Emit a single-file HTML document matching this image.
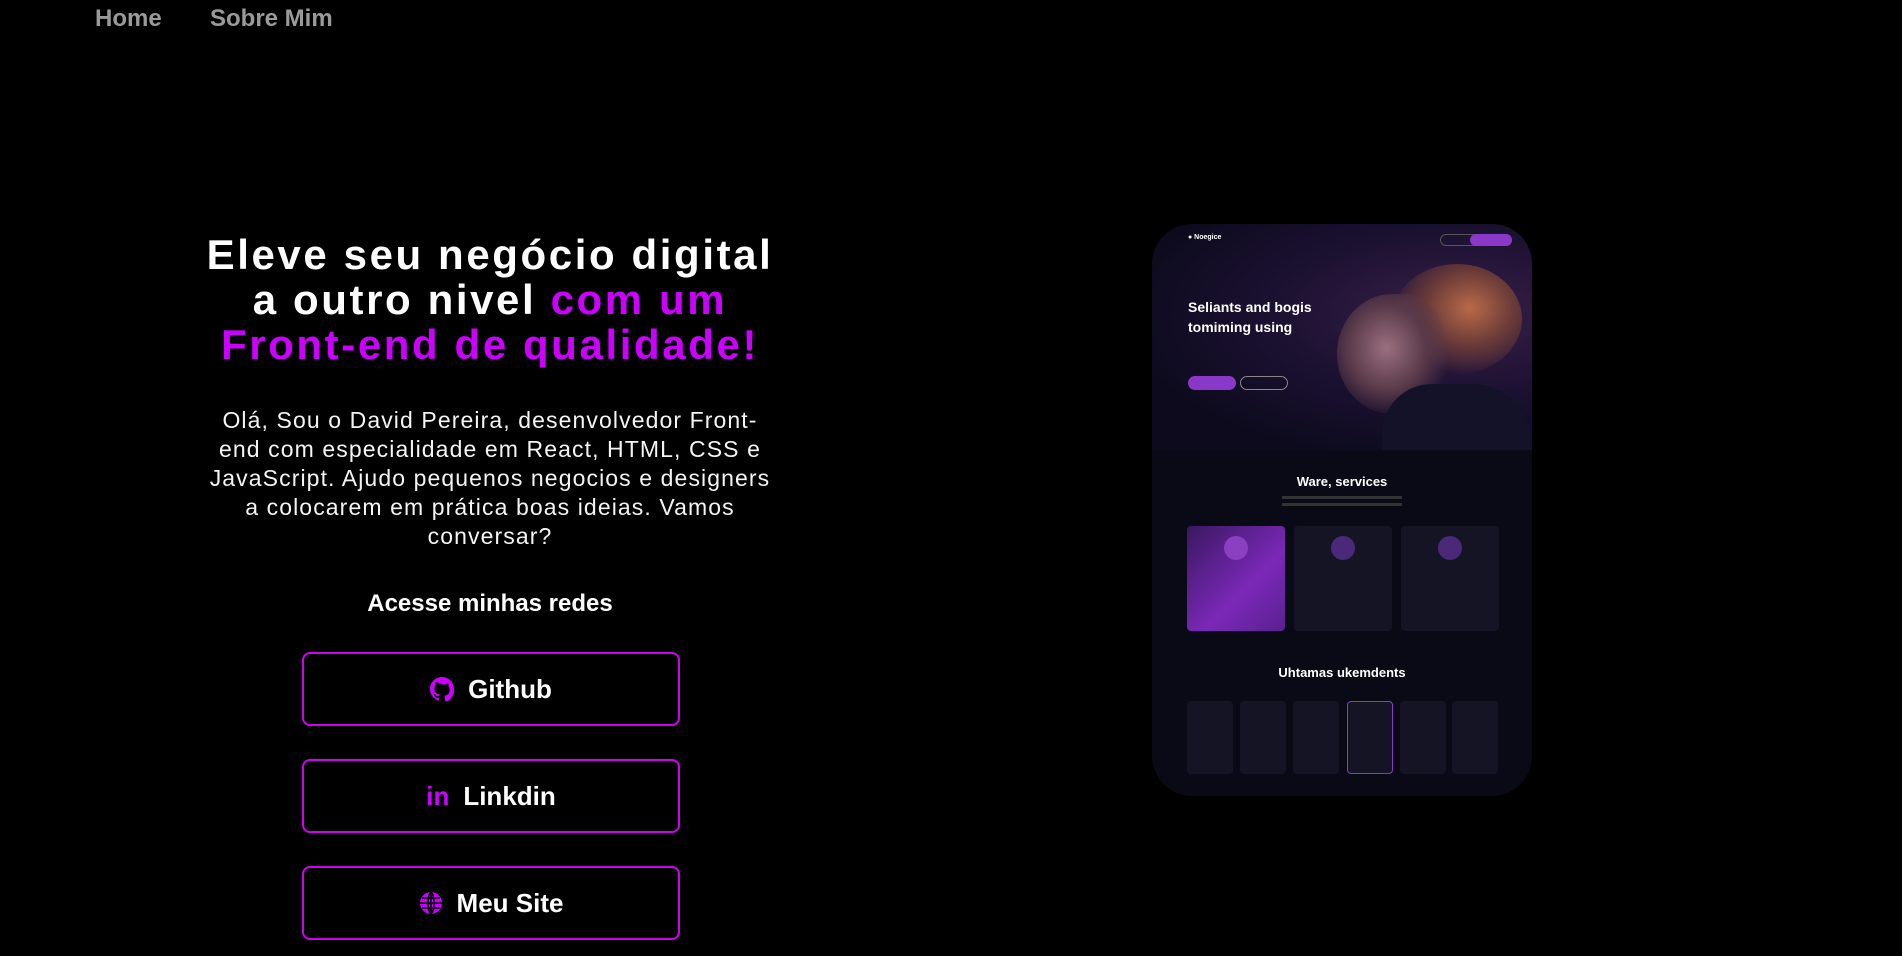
<!DOCTYPE html>
<html><head><meta charset="utf-8"><style>
*{margin:0;padding:0;box-sizing:border-box}
body{width:1902px;height:956px;background:#000;font-family:"Liberation Sans",sans-serif;color:#fff;overflow:hidden;position:relative}
.nav a{position:absolute;top:5px;font-size:24px;font-weight:bold;color:#9a9a9a;text-decoration:none}
h1{position:absolute;left:90px;width:800px;top:232px;text-align:center;font-size:42px;line-height:45px;font-weight:bold;letter-spacing:2.6px}
.m{color:#cc00ff}
.p{position:absolute;left:90px;width:800px;top:406px;text-align:center;font-size:23px;line-height:29px;color:#f4f4f4;letter-spacing:1.1px;white-space:nowrap}
.h2{position:absolute;left:170px;width:640px;top:590px;text-align:center;font-size:24px;font-weight:bold}
.btn{position:absolute;left:302px;width:378px;height:74px;border:2px solid #d000f0;border-radius:8px;display:flex;align-items:center;justify-content:center;gap:14px;font-size:26px;font-weight:bold}
.mock{position:absolute;left:1152px;top:224px;width:380px;height:572px;border-radius:40px;overflow:hidden;background:#0a0a16}
.hero{position:absolute;left:0;top:0;width:380px;height:226px;background:radial-gradient(ellipse at 80% 40%,#3a2048 0%,#1a1030 45%,#0c0a1c 80%)}
.t{position:absolute;color:#fff;font-weight:bold}
.card{position:absolute;background:#141424;border-radius:4px}
</style></head><body>
<div class="nav"><a style="left:95px">Home</a><a style="left:210px">Sobre Mim</a></div>
<h1>Eleve seu negócio digital<br>a outro nivel <span class="m">com um<br>Front-end de qualidade!</span></h1>
<div class="p">Olá, Sou o David Pereira, desenvolvedor Front-<br>end com especialidade em React, HTML, CSS e<br>JavaScript. Ajudo pequenos negocios e designers<br>a colocarem em prática boas ideias. Vamos<br>conversar?</div>
<div class="h2">Acesse minhas redes</div>
<div class="btn" style="top:652px"><svg width="24" height="24" viewBox="0 0 16 16"><path fill="#cc00ff" d="M8 0C3.58 0 0 3.58 0 8c0 3.54 2.290 6.530 5.470 7.590.4.07.55-.17.55-.38v-1.330c-2.230.48-2.7-1.070-2.7-1.070-.36-.92-.89-1.170-.89-1.170-.73-.5.06-.49.06-.49.8.06 1.230.83 1.230.83.71 1.220 1.870.87 2.330.66.07-.52.28-.87.5-1.070-1.780-.2-3.640-.89-3.640-3.950 0-.87.31-1.590.82-2.150-.08-.2-.36-1.020.08-2.120 0 0 .67-.21 2.200.82A7.600 7.600 0 0 1 8 4.800c.68 0 1.360.09 2 .27 1.530-1.040 2.200-.82 2.200-.82.44 1.100.16 1.920.08 2.120.51.56.82 1.270.82 2.150 0 3.070-1.870 3.750-3.650 3.950.29.25.54.73.54 1.480v2.200c0 .21.15.46.55.38A8 8 0 0 0 16 8c0-4.420-3.580-8-8-8z"/></svg>Github</div>
<div class="btn" style="top:759px"><span style="color:#cc00ff;font-size:26px;font-weight:bold">in</span>Linkdin</div>
<div class="btn" style="top:866px"><svg width="24" height="24" viewBox="0 0 24 24"><circle cx="12" cy="12" r="11" fill="#cc00ff"/><path d="M1 12h22M3 7h18M3 17h18M12 1v22" stroke="#000" stroke-width="1.6" fill="none"/><path d="M12 1c-4 4-4 18 0 22M12 1c4 4 4 18 0 22" stroke="#000" stroke-width="1.6" fill="none"/></svg>Meu Site</div>
<div class="mock">
<div class="hero"></div>
<div style="position:absolute;left:240px;top:40px;width:130px;height:110px;border-radius:50%;background:radial-gradient(ellipse at 60% 40%,#b86a48 0%,#6a3a38 40%,transparent 72%)"></div>
<div style="position:absolute;left:185px;top:70px;width:110px;height:120px;border-radius:50% 40% 45% 50%;background:radial-gradient(ellipse at 45% 45%,#9a7080 0%,#5a3a4a 45%,transparent 75%)"></div>
<div style="position:absolute;left:230px;top:160px;width:150px;height:66px;background:#131228;border-radius:50px 60px 0 0"></div>
<div class="t" style="left:36px;top:10px;font-size:7px">● Noegice</div>
<div style="position:absolute;left:288px;top:10px;width:72px;height:12px;border-radius:6px;border:1px solid #555"></div>
<div style="position:absolute;left:318px;top:10px;width:42px;height:12px;border-radius:6px;background:#8a38c8"></div>
<div class="t" style="left:36px;top:73px;font-size:14px;line-height:20px">Seliants and bogis<br>tomiming using</div>
<div style="position:absolute;left:36px;top:152px;width:48px;height:14px;border-radius:7px;background:#8a38c8"></div>
<div style="position:absolute;left:88px;top:152px;width:48px;height:14px;border-radius:7px;border:1px solid #888"></div>
<div class="t" style="left:0;width:380px;text-align:center;top:250px;font-size:13px">Ware, services</div>
<div style="position:absolute;left:130px;top:272px;width:120px;height:3px;background:#333"></div>
<div style="position:absolute;left:130px;top:279px;width:120px;height:3px;background:#333"></div>
<div class="card" style="left:35px;top:302px;width:98px;height:105px;background:linear-gradient(135deg,#3a1860,#7a28b8 60%,#5a2090)"></div>
<div class="card" style="left:142px;top:302px;width:98px;height:105px"></div>
<div class="card" style="left:249px;top:302px;width:98px;height:105px"></div>
<div style="position:absolute;left:72px;top:312px;width:24px;height:24px;border-radius:50%;background:#8a40c0"></div>
<div style="position:absolute;left:179px;top:312px;width:24px;height:24px;border-radius:50%;background:#4a2a78"></div>
<div style="position:absolute;left:286px;top:312px;width:24px;height:24px;border-radius:50%;background:#4a2a78"></div>
<div class="t" style="left:0;width:380px;text-align:center;top:441px;font-size:13px">Uhtamas ukemdents</div>
<div class="card" style="left:35px;top:477px;width:46px;height:73px"></div>
<div class="card" style="left:88px;top:477px;width:46px;height:73px"></div>
<div class="card" style="left:141px;top:477px;width:46px;height:73px"></div>
<div class="card" style="left:195px;top:477px;width:46px;height:73px;border:1px solid #8a38c8"></div>
<div class="card" style="left:248px;top:477px;width:46px;height:73px"></div>
<div class="card" style="left:300px;top:477px;width:46px;height:73px"></div>
</div>
</body></html>
